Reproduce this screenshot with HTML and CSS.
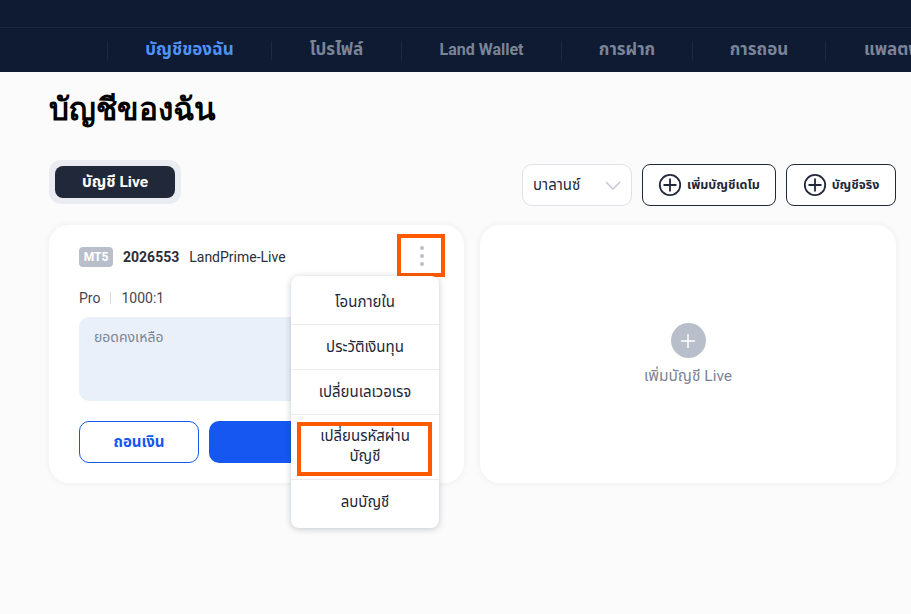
FILE: index.html
```html
<!DOCTYPE html>
<html lang="th">
<head>
<meta charset="utf-8">
<title>บัญชีของฉัน</title>
<link rel="stylesheet" href="styles.css">
</head>
<body>
<header class="header">
  <div class="topbar"></div>
  <nav class="nav">
    <a class="nav-item active w164">บัญชีของฉัน</a>
    <a class="nav-item w130">โปรไฟล์</a>
    <a class="nav-item w160 latin">Land Wallet</a>
    <a class="nav-item w131">การฝาก</a>
    <a class="nav-item w133">การถอน</a>
    <a class="nav-item w133 last">แพลตฟอร์ม</a>
  </nav>
</header>
<main class="main">
  <h1 class="title">บัญชีของฉัน</h1>
  <div class="toolbar">
    <div class="tabs"><button class="tab">บัญชี Live</button></div>
    <div class="actions">
      <div class="select">
        <span>บาลานซ์</span>
        <svg class="chevron" width="16" height="9" viewBox="0 0 16 9"><path d="M1 1l7 7 7-7" fill="none" stroke="#c5cad3" stroke-width="1.6"/></svg>
      </div>
      <button class="outline wide">
        <svg width="24" height="24" viewBox="0 0 24 24"><circle cx="12" cy="12" r="10.200" fill="none" stroke="#20283a" stroke-width="1.800"/><path d="M12 5.500v13M5.500 12h13" stroke="#20283a" stroke-width="1.800"/></svg>
        <span>เพิ่มบัญชีเดโม</span>
      </button>
      <button class="outline narrow">
        <svg width="24" height="24" viewBox="0 0 24 24"><circle cx="12" cy="12" r="10.200" fill="none" stroke="#20283a" stroke-width="1.800"/><path d="M12 5.500v13M5.500 12h13" stroke="#20283a" stroke-width="1.800"/></svg>
        <span>บัญชีจริง</span>
      </button>
    </div>
  </div>
  <section class="cards">
    <article class="card account">
      <div class="acc-head">
        <span class="badge">MT5</span>
        <strong class="acc-num">2026553</strong>
        <span class="acc-server">LandPrime-Live</span>
      </div>
      <div class="acc-meta"><span>Pro</span><i class="sep"></i><span>1000:1</span></div>
      <div class="balance">ยอดคงเหลือ</div>
      <div class="acc-buttons">
        <button class="btn-withdraw">ถอนเงิน</button>
        <button class="btn-deposit"></button>
      </div>
      <div class="kebab-box">
        <span class="dot"></span><span class="dot"></span><span class="dot"></span>
      </div>
      <ul class="menu">
        <li>โอนภายใน</li>
        <li>ประวัติเงินทุน</li>
        <li>เปลี่ยนเลเวอเรจ</li>
        <li class="marked">เปลี่ยนรหัสผ่านบัญชี</li>
        <li>ลบบัญชี</li>
      </ul>
    </article>
    <article class="card add">
      <span class="add-icon"><svg width="14" height="14" viewBox="0 0 14 14"><path d="M7 0v14M0 7h14" stroke="#fff" stroke-width="1.500"/></svg></span>
      <span class="add-label">เพิ่มบัญชี Live</span>
    </article>
  </section>
</main>
</body>
</html>
```

FILE: styles.css
```css
*, *::after { box-sizing: border-box; }
html, body { margin: 0; height: 100%; }
body {
  background: #fbfbfc;
  font-family: Roboto, "Noto Sans Thai", sans-serif;
  color: #20283a;
  overflow: hidden;
}
button { font-family: inherit; cursor: pointer; }

.header { height: 72px; background: #0f1a33; overflow: hidden; }
.topbar { height: 28px; border-bottom: 1px solid #1b2640; }
.nav { height: 44px; display: flex; align-items: center; padding-left: 107px; }
.nav-item {
  flex: none;
  height: 19px;
  display: flex;
  align-items: center;
  justify-content: center;
  border-left: 1px solid #1e2941;
  font-size: 17px;
  font-weight: 700;
  color: #7a8596;
  white-space: nowrap;
}
.nav-item.latin { font-size: 16px; padding-bottom: 2px; }
.nav-item.active { color: #4f93f6; }
.nav-item.last { justify-content: flex-start; padding-left: 38px; }
.w164 { width: 164px; }
.w130 { width: 130px; }
.w160 { width: 160px; }
.w131 { width: 131px; }
.w133 { width: 133px; }

.main { padding: 0 15px 0 49px; }
.title {
  margin: 18px 0 0; height: 70px; font-family: "DejaVu Serif", serif;
  font-size: 31.500px; line-height: 38px; font-weight: 700; color: #000;
}

.toolbar { display: flex; justify-content: space-between; align-items: flex-start; height: 65px; }
.tabs { width: 132px; height: 44px; padding: 6px; background: #ebecf1; border-radius: 12px; }
.tab {
  width: 120px; height: 32px; border: 0; border-radius: 8px;
  background: #20283a; color: #fff; font-size: 15.500px; font-weight: 700;
}
.actions { display: flex; gap: 10px; padding-top: 4px; }
.select {
  width: 110px; height: 42px; padding: 0 10px; display: flex; align-items: center; justify-content: space-between;
  background: #fff; border: 1px solid #dfe1e6; border-radius: 10px; font-size: 15px; color: #20283a;
}
.outline {
  height: 42px; display: flex; align-items: center; justify-content: center; gap: 5px; padding: 0;
  background: #fff; border: 1px solid #20283a; border-radius: 8px; color: #20283a; font-size: 12.500px; font-weight: 700;
}
.wide { width: 134px; }
.narrow { width: 110px; }

.cards { display: grid; grid-template-columns: 415px 416px; gap: 16px; }
.card {
  height: 258px; background: #fff; border-radius: 20px; box-shadow: 0 0 6px rgba(30, 40, 60, .07);
}
.account { position: relative; padding: 22px 30px 0; }
.acc-head { display: flex; align-items: center; height: 20px; font-size: 14px; }
.badge {
  width: 34px; height: 20px; margin-right: 10px; display: flex; align-items: center; justify-content: center;
  background: #b9bfca; border-radius: 4px; color: #fff; font-size: 12px; font-weight: 700;
}
.acc-num { font-weight: 700; color: #2a2f3a; margin-right: 10px; }
.acc-server { color: #2a2f3a; }
.acc-meta { display: flex; align-items: center; height: 20px; margin-top: 21px; font-size: 14px; color: #3f4653; }
.sep { width: 1px; height: 12px; margin: 0 10px; background: #d6d9df; }
.balance {
  height: 84px; margin-top: 9px; padding: 10px 15px; background: #e9f0fa; border-radius: 10px;
  font-size: 14px; line-height: 20px; color: #7d8494;
}
.acc-buttons { display: flex; gap: 10px; margin-top: 20px; }
.btn-withdraw {
  width: 120px; height: 42px; background: #fff; border: 1px solid #1557f0; border-radius: 10px;
  color: #1557f0; font-size: 15px; font-weight: 700;
}
.btn-deposit { flex: 1; height: 42px; border: 0; border-radius: 10px; background: #1557f0; }

.kebab-box {
  position: absolute; left: 348px; top: 9px; width: 48px; height: 43px; padding: 1px 0 0 1px;
  border: 4px solid #ff5a00; display: flex; flex-direction: column; align-items: center; justify-content: center; gap: 4px;
}
.dot { width: 4px; height: 4px; border-radius: 50%; background: #b9bfca; }

.menu {
  position: absolute; left: 242px; top: 51px; width: 148px; height: 252px; margin: 0; padding: 4px 0 0; list-style: none;
  background: #fff; border-radius: 8px; box-shadow: 0 1px 6px rgba(30, 40, 60, .25);
  font-size: 15px; color: #20283a; text-align: center;
}
.menu li {
  height: 45px; padding: 0 20px; display: flex; align-items: center; justify-content: center;
  border-bottom: 1px solid #ececef; line-height: 20px;
}
.menu li.marked { height: 65px; position: relative; padding-bottom: 2px; }
.menu li.marked::after {
  content: ""; position: absolute; left: 6px; top: 7px; width: 135px; height: 54px; border: 4px solid #ff5a00;
}
.menu li:last-child { border-bottom: 0; padding-bottom: 2px; }

.add { display: flex; flex-direction: column; align-items: center; padding-top: 98px; }
.add-icon { width: 35px; height: 35px; border-radius: 50%; background: #b9bfca; display: flex; align-items: center; justify-content: center; }
.add-label { margin-top: 8px; font-size: 15.500px; color: #7d8494; line-height: 20px; }
```
